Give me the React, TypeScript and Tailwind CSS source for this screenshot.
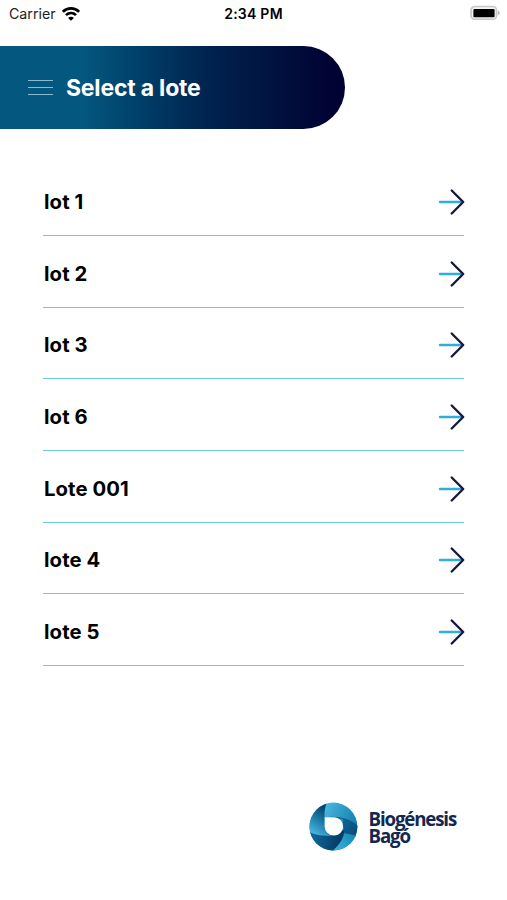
const lots = ['lot 1', 'lot 2', 'lot 3', 'lot 6', 'Lote 001', 'lote 4', 'lote 5'];

function WifiIcon() {
  return (
    <svg className="ml-[6px] h-[15px] w-[18px]" viewBox="0 0 18 15" fill="none" stroke="#000" strokeWidth="2.7">
      <path d="M.9 4.8C5.4.3 12.6.3 17.1 4.8" />
      <path d="M4 8.1c2.8-2.8 7.2-2.8 10 0" />
      <path d="M9 13.8 6.1 10.9c1.6-1.6 4.2-1.6 5.8 0Z" fill="#000" stroke="none" />
    </svg>
  );
}

function BatteryIcon() {
  return (
    <svg className="h-[15px] w-[31px]" viewBox="0 0 31 15">
      <rect x="1.1" y="1.5" width="25.4" height="12.8" rx="3.6" fill="#f4f4f4" stroke="#c8c8c8" strokeWidth="1.7" />
      <rect x="3.4" y="4" width="21.2" height="8.2" rx="1" fill="#000" />
      <path d="M27.8 5.6c2.5.8 2.5 3.9 0 4.7Z" fill="#b4b4b4" />
    </svg>
  );
}

function ArrowIcon() {
  return (
    <svg className="-mr-px h-[28px] w-[28px]" viewBox="0 0 28 28" fill="none" strokeLinecap="round">
      <path d="M3 14h21" stroke="#2eaeda" strokeWidth="2.4" />
      <path d="M14.7 2.5 26.2 14 14.7 25.5" stroke="#17183f" strokeWidth="2.4" strokeLinejoin="round" />
    </svg>
  );
}

function LogoMark() {
  return (
    <svg className="h-[50px] w-[50px]" viewBox="0 0 50 50">
      <defs>
        <linearGradient id="bladeTop" gradientUnits="userSpaceOnUse" x1="17" y1="6" x2="47" y2="20">
          <stop offset="0" stopColor="#46b4dc" />
          <stop offset="1" stopColor="#157fae" />
        </linearGradient>
        <linearGradient id="bladeRight" gradientUnits="userSpaceOnUse" x1="30" y1="17" x2="47" y2="30">
          <stop offset="0" stopColor="#0e6896" />
          <stop offset="1" stopColor="#0a4f7c" />
        </linearGradient>
        <linearGradient id="bladeLowerRight" gradientUnits="userSpaceOnUse" x1="46" y1="30" x2="26" y2="46">
          <stop offset="0" stopColor="#1583b3" />
          <stop offset="1" stopColor="#3ab1da" />
        </linearGradient>
        <linearGradient id="bladeBottom" gradientUnits="userSpaceOnUse" x1="5" y1="35" x2="30" y2="40">
          <stop offset="0" stopColor="#0f6594" />
          <stop offset="1" stopColor="#053d69" />
        </linearGradient>
        <linearGradient id="bladeUpperLeft" gradientUnits="userSpaceOnUse" x1="17" y1="8" x2="2" y2="29">
          <stop offset="0" stopColor="#07466f" />
          <stop offset=".5" stopColor="#1e7eaa" />
          <stop offset="1" stopColor="#49b1d8" />
        </linearGradient>
        <clipPath id="disc">
          <circle cx="24.4" cy="24.6" r="24" />
        </clipPath>
      </defs>
      <g clipPath="url(#disc)">
        <rect width="50" height="50" fill="url(#bladeTop)" />
        <path d="M15.7 15.2C29 13.5 42 16 50 25v10H34V17Z" fill="url(#bladeRight)" />
        <path d="M34 24c1.5 4 .5 6-.5 7C38 31.5 44 33 50 34v16H20L26 33Z" fill="url(#bladeLowerRight)" />
        <path d="M0 29.5C6 31.5 13 32 20 30l15.5-2C35 36 30 44 22 50H0Z" fill="url(#bladeBottom)" />
        <path d="M18.2 0C15.5 6 15.3 10 15.7 15.2V25c.3 4 3 7.5 7 9C14 34 7 33 0 30V0Z" fill="url(#bladeUpperLeft)" />
      </g>
      <path d="M15.7 15.2H25a9.2 9.2 0 1 1-9.3 9.3Z" fill="#fff" />
    </svg>
  );
}

export default function App() {
  return (
    <div className="flex h-[900px] w-[507px] flex-col overflow-hidden bg-white font-['Inter','Liberation_Sans',sans-serif] text-black">
      <header className="grid h-[45.5px] grid-cols-3 items-start pt-[5px]">
        <div className="flex items-center pl-[9px]">
          <span className="text-[14.2px] leading-[18px] text-[#222]">Carrier</span>
          <WifiIcon />
        </div>
        <div className="text-center text-[14px] leading-[18px] font-semibold tracking-[0.25px]">2:34 PM</div>
        <div className="flex justify-end pr-[6px]">
          <BatteryIcon />
        </div>
      </header>

      <div className="flex h-[83px] w-[345.4px] shrink-0 items-center rounded-r-full bg-linear-to-r from-[#04577f] from-24% via-[#00214d] via-62% to-[#000232] to-98% pl-[28px]">
        <button aria-label="Menu" className="flex w-[25px] flex-col gap-[6px]">
          <span className="h-px w-full bg-[#8db8cd]" />
          <span className="h-px w-full bg-[#8db8cd]" />
          <span className="h-px w-full bg-[#8db8cd]" />
        </button>
        <h1 className="ml-[13px] pt-px text-[23px] leading-7 font-[650] tracking-[-0.2px] whitespace-nowrap text-white">Select a lote</h1>
      </div>

      <ul className="mt-[35.9px] ml-[43px] w-[421px]">
        {lots.map((lot) => (
          <li key={lot} className="flex h-[71.67px] items-center justify-between border-b border-[#6cc8ee] pt-[4.6px]">
            <span className="pl-px text-[20.3px] leading-6 font-[650] tracking-[0.1px]">{lot}</span>
            <ArrowIcon />
          </li>
        ))}
      </ul>

      <footer className="mt-auto mb-[48px] ml-[309px] flex items-center">
        <LogoMark />
        <div className="ml-[9.5px] font-['Open_Sans','Noto_Sans',sans-serif] text-[18.7px] leading-[17px] font-bold tracking-[-1.15px] text-[#14284f]">
          <div>Biogénesis</div>
          <div>Bagó</div>
        </div>
      </footer>
    </div>
  );
}
